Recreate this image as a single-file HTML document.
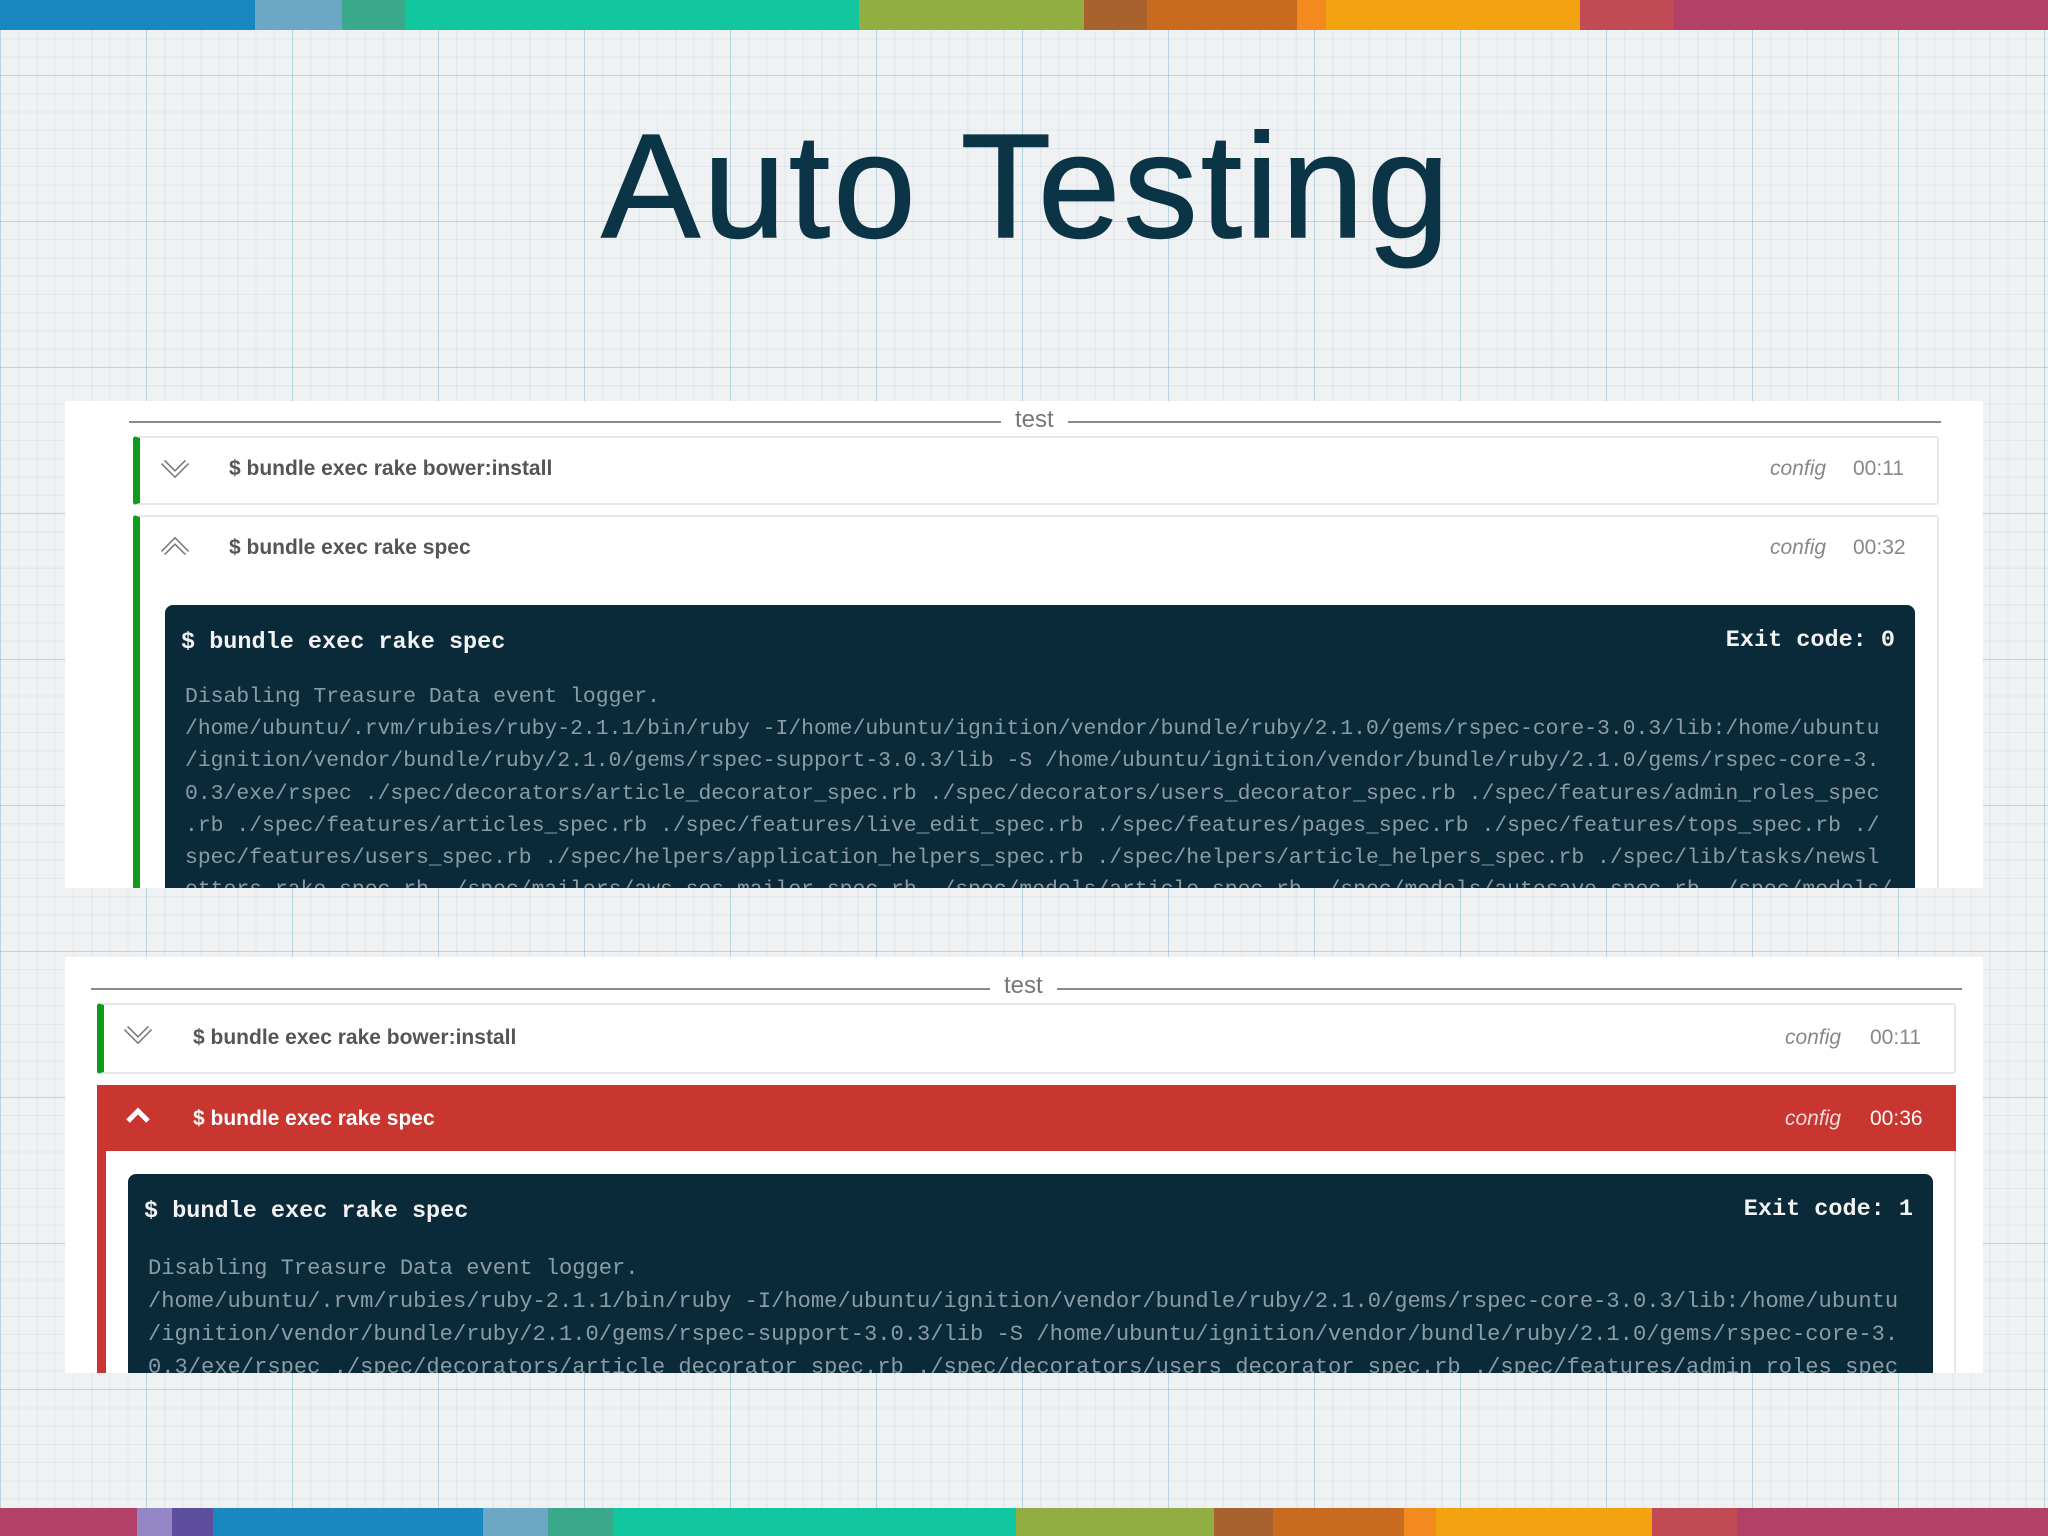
<!DOCTYPE html>
<html><head><meta charset="utf-8"><style>
*{margin:0;padding:0;box-sizing:border-box}
body{width:2048px;height:1536px;position:relative;overflow:hidden;background:#eff1f3;font-family:"Liberation Sans",sans-serif}
.grid{position:absolute;inset:0;background:
repeating-linear-gradient(90deg,rgba(120,180,210,.4) 0 1px,transparent 1px 146px),
repeating-linear-gradient(0deg,rgba(120,180,210,.4) 0 1px,transparent 1px 146px),
repeating-linear-gradient(90deg,rgba(150,190,210,.16) 0 1px,transparent 1px 18.25px),
repeating-linear-gradient(0deg,rgba(150,190,210,.16) 0 1px,transparent 1px 18.25px);}
.bar{position:absolute;left:0;width:2048px;height:30px;display:flex}
.bar div{height:100%}
h1{position:absolute;left:0;width:2048px;top:97px;text-align:center;font-size:148px;font-weight:normal;color:#0b3446;line-height:180px;padding-left:6px;letter-spacing:3.3px;-webkit-text-stroke:1.5px #0b3446}
.panel{position:absolute;left:65px;width:1918px;background:#fff;overflow:hidden}
.sep{position:absolute;height:2px;background:#8a8a8a}
.sepT{position:absolute;font-size:24px;color:#777;background:#fff;padding:0 14px;line-height:28px}
.row{position:absolute;border:2px solid #e8e8e8;border-left:7px solid #0f9a1a;background:#fff;border-radius:3px}
.cmd{position:absolute;font-size:21px;font-weight:bold;color:#555}
.cfg{position:absolute;font-size:21px;font-style:italic;color:#888}
.tm{position:absolute;font-size:21px;color:#888}
.term{position:absolute;background:#0a2a3a;border-radius:8px;font-family:"Liberation Mono","DejaVu Sans Mono",monospace}
.th{position:absolute;color:#f2f2f2;font-weight:bold;font-size:23.5px}
.log{position:absolute;color:#8a9ca6;white-space:pre}
</style></head><body>
<div class="grid"></div>
<div class="bar" style="top:0">
<div style="width:255px;background:#1a88c0"></div><div style="width:87px;background:#6ca8c6"></div><div style="width:63px;background:#3aa88a"></div><div style="width:454px;background:#12c79f"></div><div style="width:225px;background:#92ad42"></div><div style="width:63px;background:#a8622e"></div><div style="width:150px;background:#c96b1f"></div><div style="width:29px;background:#f28a1e"></div><div style="width:254px;background:#f2a30f"></div><div style="width:94px;background:#c24a55"></div><div style="width:374px;background:#b34167"></div></div>
<div class="bar" style="top:1508px;height:28px">
<div style="width:137px;background:#b34167"></div><div style="width:35px;background:#9486c4"></div><div style="width:41px;background:#5e4f9e"></div><div style="width:270px;background:#1a88c0"></div><div style="width:65px;background:#6ca8c6"></div><div style="width:65px;background:#3aa88a"></div><div style="width:403px;background:#12c79f"></div><div style="width:198px;background:#92ad42"></div><div style="width:59px;background:#a8622e"></div><div style="width:131px;background:#c96b1f"></div><div style="width:32px;background:#f28a1e"></div><div style="width:216px;background:#f2a30f"></div><div style="width:85px;background:#c24a55"></div><div style="width:311px;background:#b34167"></div></div>
<h1>Auto Testing</h1>

<div class="panel" style="top:401px;height:487px">
<div class="sep" style="left:64px;width:1812px;top:20px"></div>
<div class="sepT" style="left:936px;top:5px">test</div>
<div class="row" style="left:68px;top:35px;width:1806px;height:69px"></div>
<svg style="position:absolute;left:95px;top:57px" width="30" height="22" viewBox="0 0 30 22"><path d="M3 4 L15 16 L27 4" fill="none" stroke="#777" stroke-width="6"/><path d="M3 4 L15 16 L27 4" fill="none" stroke="#fff" stroke-width="3"/></svg>
<div class="cmd" style="left:164px;top:56px">$ bundle exec rake bower:install</div>
<div class="cfg" style="left:1705px;top:56px">config</div><div class="tm" style="left:1788px;top:56px">00:11</div>
<div class="row" style="left:68px;top:114px;width:1806px;height:420px"></div>
<svg style="position:absolute;left:95px;top:134px" width="30" height="22" viewBox="0 0 30 22"><path d="M3 18 L15 6 L27 18" fill="none" stroke="#777" stroke-width="6"/><path d="M3 18 L15 6 L27 18" fill="none" stroke="#fff" stroke-width="3"/></svg>
<div class="cmd" style="left:164px;top:135px">$ bundle exec rake spec</div>
<div class="cfg" style="left:1705px;top:135px">config</div><div class="tm" style="left:1788px;top:135px">00:32</div>
<div class="term" style="left:100px;top:204px;width:1750px;height:400px">
<div class="th" style="left:16px;top:24px">$ bundle exec rake spec</div>
<div class="th" style="right:20px;top:22px">Exit code: 0</div>
<div class="log" style="left:20px;top:76px;font-size:21.4px;line-height:32.2px">Disabling Treasure Data event logger.
/home/ubuntu/.rvm/rubies/ruby-2.1.1/bin/ruby -I/home/ubuntu/ignition/vendor/bundle/ruby/2.1.0/gems/rspec-core-3.0.3/lib:/home/ubuntu
/ignition/vendor/bundle/ruby/2.1.0/gems/rspec-support-3.0.3/lib -S /home/ubuntu/ignition/vendor/bundle/ruby/2.1.0/gems/rspec-core-3.
0.3/exe/rspec ./spec/decorators/article_decorator_spec.rb ./spec/decorators/users_decorator_spec.rb ./spec/features/admin_roles_spec
.rb ./spec/features/articles_spec.rb ./spec/features/live_edit_spec.rb ./spec/features/pages_spec.rb ./spec/features/tops_spec.rb ./
spec/features/users_spec.rb ./spec/helpers/application_helpers_spec.rb ./spec/helpers/article_helpers_spec.rb ./spec/lib/tasks/newsl
etters_rake_spec.rb ./spec/mailers/aws_ses_mailer_spec.rb ./spec/models/article_spec.rb ./spec/models/autosave_spec.rb ./spec/models/</div>
</div>
</div>

<div class="panel" style="top:957px;height:416px">
<div class="sep" style="left:26px;width:1871px;top:31px"></div>
<div class="sepT" style="left:925px;top:15px">test</div>
<div class="row" style="left:32px;top:46px;width:1859px;height:71px"></div>
<svg style="position:absolute;left:58px;top:67px" width="30" height="22" viewBox="0 0 30 22"><path d="M3 4 L15 16 L27 4" fill="none" stroke="#777" stroke-width="6"/><path d="M3 4 L15 16 L27 4" fill="none" stroke="#fff" stroke-width="3"/></svg>
<div class="cmd" style="left:128px;top:69px">$ bundle exec rake bower:install</div>
<div class="cfg" style="left:1720px;top:69px">config</div><div class="tm" style="left:1805px;top:69px">00:11</div>
<div style="position:absolute;left:32px;top:128px;width:1859px;height:400px;border-left:9px solid #c9352f;border-right:2px solid #e8e8e8"></div>
<div style="position:absolute;left:32px;top:128px;width:1859px;height:66px;background:#c9352f"></div>
<svg style="position:absolute;left:58px;top:148px" width="30" height="22" viewBox="0 0 30 22"><path d="M5 16 L15 6 L25 16" fill="none" stroke="#fff" stroke-width="5"/></svg>
<div class="cmd" style="left:128px;top:150px;color:#fff">$ bundle exec rake spec</div>
<div class="cfg" style="left:1720px;top:150px;color:#f3dcdc">config</div><div class="tm" style="left:1805px;top:150px;color:#fff">00:36</div>
<div class="term" style="left:63px;top:217px;width:1805px;height:400px">
<div class="th" style="left:16px;top:24px">$ bundle exec rake spec</div>
<div class="th" style="right:20px;top:22px">Exit code: 1</div>
<div class="log" style="left:20px;top:78px;font-size:22.1px;line-height:33px">Disabling Treasure Data event logger.
/home/ubuntu/.rvm/rubies/ruby-2.1.1/bin/ruby -I/home/ubuntu/ignition/vendor/bundle/ruby/2.1.0/gems/rspec-core-3.0.3/lib:/home/ubuntu
/ignition/vendor/bundle/ruby/2.1.0/gems/rspec-support-3.0.3/lib -S /home/ubuntu/ignition/vendor/bundle/ruby/2.1.0/gems/rspec-core-3.
0.3/exe/rspec ./spec/decorators/article_decorator_spec.rb ./spec/decorators/users_decorator_spec.rb ./spec/features/admin_roles_spec</div>
</div>
</div>
</body></html>
